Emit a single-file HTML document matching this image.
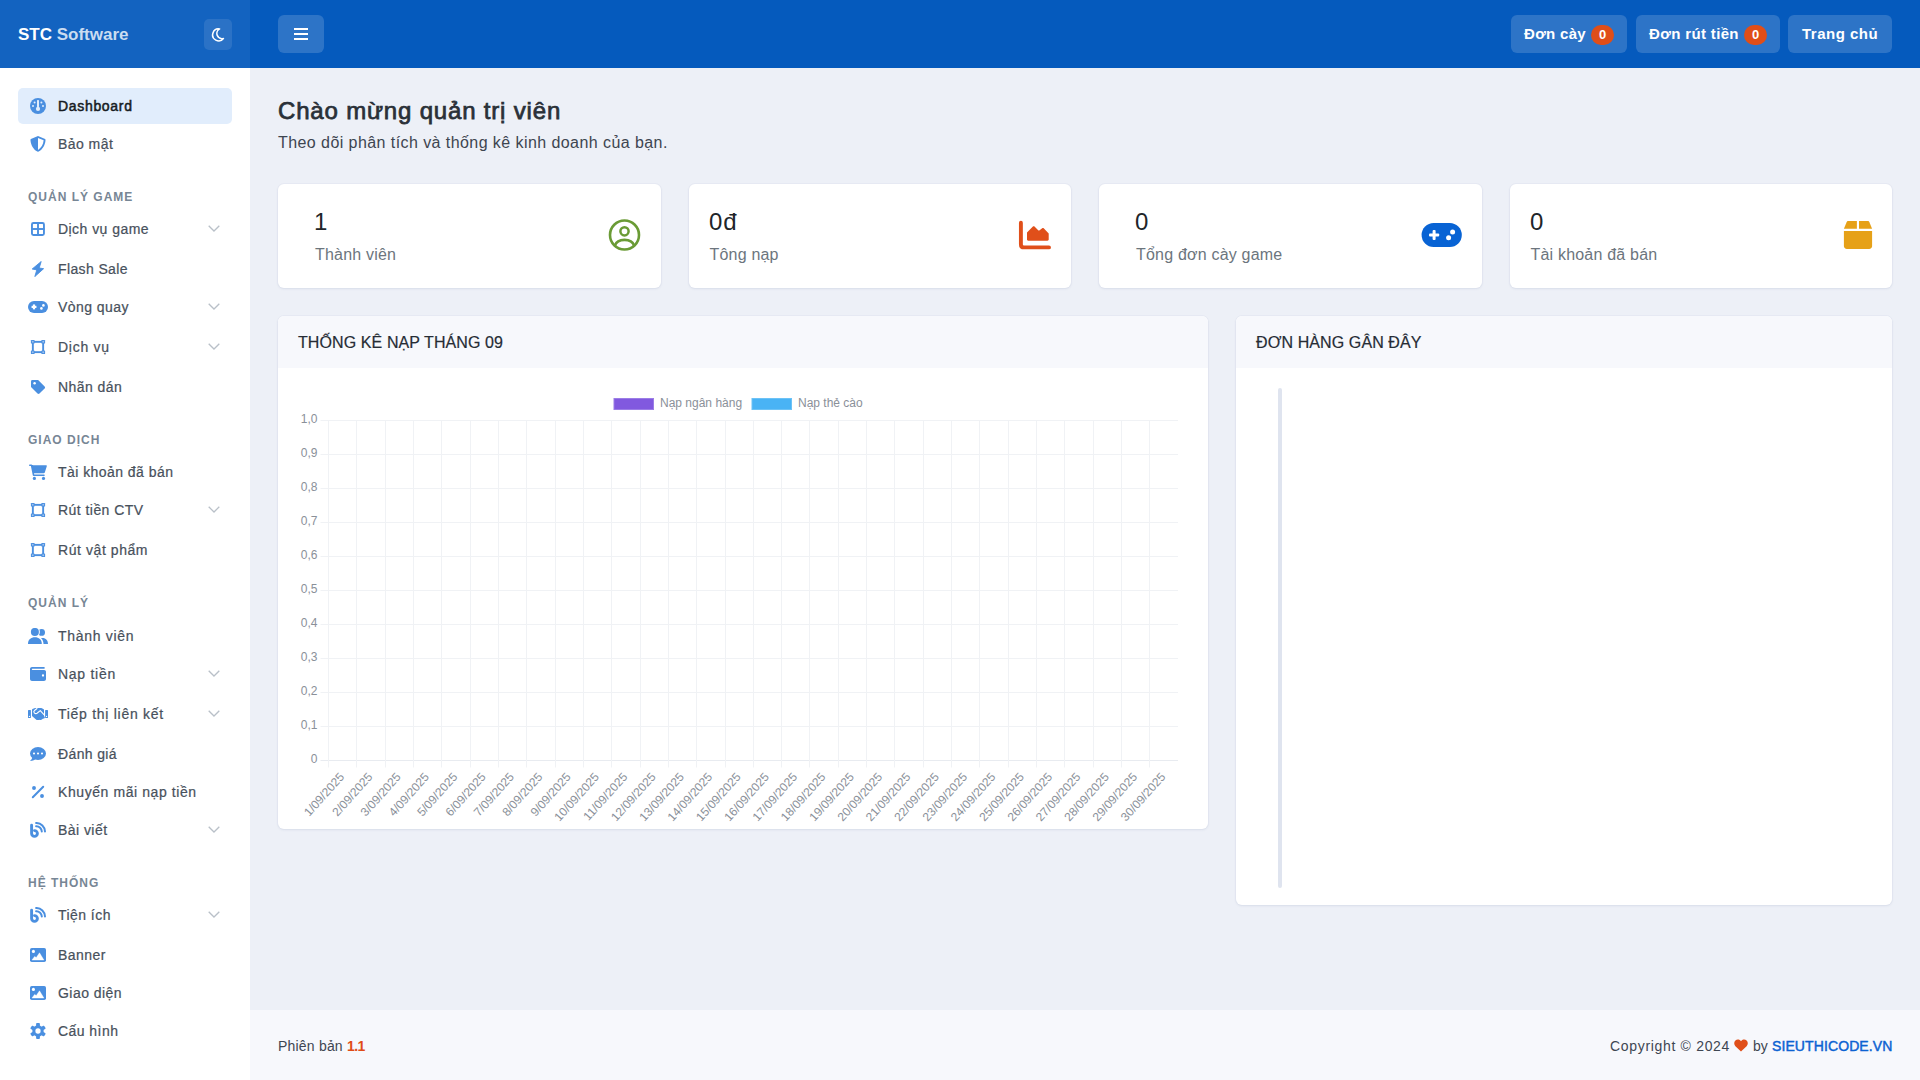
<!DOCTYPE html>
<html lang="vi"><head><meta charset="utf-8"><title>Dashboard</title>
<style>
*{box-sizing:border-box;margin:0;padding:0}
html,body{width:1920px;height:1080px;overflow:hidden}
body{position:relative;background:#edf0f7;font-family:"Liberation Sans", sans-serif;color:#3b4350}
.abs{position:absolute}
#top{position:absolute;left:0;top:0;width:1920px;height:68px;background:#055abd}
#sbh{position:absolute;left:0;top:0;width:250px;height:68px;background:rgba(255,255,255,0.06)}
#logo{position:absolute;left:18px;top:25px;height:20px;line-height:20px;font-size:17px;font-weight:700;color:#fff;white-space:nowrap}
#logo span{color:rgba(255,255,255,0.78)}
.hbtn{position:absolute;top:15px;height:38px;border-radius:6px;background:rgba(255,255,255,0.16)}
.htxt{position:absolute;top:24px;height:20px;line-height:20px;font-size:15px;font-weight:700;color:#fff;white-space:nowrap}
.badge{position:absolute;top:25px;height:20px;width:23px;border-radius:10px;background:#e04e18;color:#fff;font-size:13px;font-weight:700;line-height:20px;text-align:center}
#side{position:absolute;left:0;top:68px;width:250px;height:1012px;background:#fff}
.it{position:absolute;left:58px;height:20px;line-height:20px;font-size:14px;color:#48515c;white-space:nowrap;letter-spacing:0.45px;-webkit-text-stroke:0.22px #48515c}
.it.act{color:#161b22;letter-spacing:0.68px;-webkit-text-stroke:0.5px #161b22}
.actbg{position:absolute;left:18px;top:88px;width:214px;height:36px;border-radius:5px;background:#e1edfc}
.sec{position:absolute;left:28px;height:20px;line-height:20px;font-size:12px;font-weight:700;color:#778695;letter-spacing:1px;white-space:nowrap}
.ico{position:absolute;height:16px;line-height:0}
.chev{position:absolute;left:208px}
.card{position:absolute;background:#fff;border-radius:6px;box-shadow:0 0 0 1px rgba(40,60,110,0.025),0 1px 3px rgba(40,60,110,0.08)}
.num{position:absolute;height:30px;line-height:30px;font-size:24px;color:#212529;white-space:nowrap}
.lbl{position:absolute;height:20px;line-height:20px;font-size:16px;color:#6c757d;white-space:nowrap;letter-spacing:0.2px}
.chead{position:absolute;left:0;top:0;right:0;height:52px;background:#f7f8fc;border-radius:6px 6px 0 0}
.htitle{position:absolute;height:20px;line-height:20px;font-size:16px;color:#262c35;white-space:nowrap;letter-spacing:0.1px;-webkit-text-stroke:0.2px #262c35}
.tk{font-family:"Liberation Sans", sans-serif;font-size:12px;fill:#8a9099}
#foot{position:absolute;left:250px;top:1010px;width:1670px;height:70px;background:#f7f8fc}
.ft{position:absolute;height:20px;line-height:20px;font-size:14px;color:#3e4652;white-space:nowrap}
</style></head><body>
<div id="top"></div>
<div id="sbh"></div>
<div id="logo">STC <span>Software</span></div>
<div class="abs" style="left:204px;top:19px;width:28px;height:31px;border-radius:5px;background:rgba(255,255,255,0.1)"></div>
<svg class="abs" style="left:210px;top:27px" width="16" height="16" viewBox="0 0 16 16"><path d="M9.6 1.9 A6 6 0 1 0 13.4 11.5 A5.2 5.2 0 0 1 9.6 1.9 Z" fill="none" stroke="#fff" stroke-width="1.55" stroke-linejoin="round"/></svg>
<div class="abs" style="left:278px;top:15px;width:46px;height:38px;border-radius:6px;background:rgba(255,255,255,0.16)"></div>
<div class="abs" style="left:294px;top:28px;width:14px;height:2px;background:#fff"></div>
<div class="abs" style="left:294px;top:33px;width:14px;height:2px;background:#fff"></div>
<div class="abs" style="left:294px;top:38px;width:14px;height:2px;background:#fff"></div>

<div class="hbtn" style="left:1511px;width:116px"></div>
<div class="htxt" style="left:1524px;letter-spacing:0.3px">Đơn cày</div>
<div class="badge" style="left:1591px">0</div>
<div class="hbtn" style="left:1636px;width:144px"></div>
<div class="htxt" style="left:1649px;letter-spacing:0.35px">Đơn rút tiền</div>
<div class="badge" style="left:1744px">0</div>
<div class="hbtn" style="left:1788px;width:104px"></div>
<div class="htxt" style="left:1802px;letter-spacing:0.5px">Trang chủ</div>

<div id="side"></div>
<div class="actbg"></div>
<div class="ico" style="top:98.0px;left:30.0px"><svg width="16" height="16" viewBox="0 0 16 16"><circle cx="8" cy="8" r="8" fill="#4a8fe0"/><rect x="7" y="2" width="2" height="7" rx="0.6" fill="#e1edfc"/><circle cx="8" cy="10.9" r="2.1" fill="#e1edfc"/><circle cx="4.6" cy="4.4" r="1" fill="#e1edfc"/><circle cx="11.4" cy="4.4" r="1" fill="#e1edfc"/><circle cx="3" cy="7.9" r="1" fill="#e1edfc"/><circle cx="13" cy="7.9" r="1" fill="#e1edfc"/></svg></div>
<div class="it act" style="top:96.0px">Dashboard</div>
<div class="ico" style="top:136.0px;left:30.0px"><svg width="16" height="16" viewBox="0 0 16 16"><path d="M8 0 L15.1 3.1 C15.5 3.3 15.6 3.8 15.5 4.4 C15.1 9 12.6 13.3 8.6 15.6 C8.2 15.9 7.8 15.9 7.4 15.6 C3.4 13.3 0.9 9 0.5 4.4 C0.4 3.8 0.5 3.3 0.9 3.1 Z" fill="#4a8fe0"/><path d="M8 1.9 L13.6 4.3 C13.4 8.3 11.4 11.8 8 13.9 Z" fill="#fff"/></svg></div>
<div class="it" style="top:134.0px">Bảo mật</div>
<div class="sec" style="top:186.6px">QUẢN LÝ GAME</div>
<div class="ico" style="top:221.0px;left:30.0px"><svg width="16" height="16" viewBox="0 0 16 16"><rect x="1.95" y="1.95" width="12" height="12" rx="1.5" fill="none" stroke="#4a8fe0" stroke-width="1.9"/><rect x="7.05" y="1.5" width="1.9" height="13" fill="#4a8fe0"/><rect x="1.5" y="7.05" width="13" height="1.9" fill="#4a8fe0"/></svg></div>
<div class="it" style="top:219.0px">Dịch vụ game</div>
<svg class="chev" style="top:225.0px" width="12" height="7" viewBox="0 0 12 7"><path d="M0.7 0.7 L6 6 L11.3 0.7" fill="none" stroke="#b9c0c8" stroke-width="1.3"/></svg>
<div class="ico" style="top:261.0px;left:30.0px"><svg width="16" height="16" viewBox="0 0 16 16"><path d="M11.2 0.5 L2.2 8 L6.8 8.9 L4.8 15.6 L13.6 7.7 L9.2 7 Z" fill="#4a8fe0" stroke="#4a8fe0" stroke-width="0.9" stroke-linejoin="round"/></svg></div>
<div class="it" style="top:259.0px;letter-spacing:0.38px">Flash Sale</div>
<div class="ico" style="top:299.0px;left:28.0px"><svg width="20" height="16" viewBox="0 0 20 16"><rect x="0" y="2" width="20" height="12" rx="6" fill="#4a8fe0"/><rect x="3.55" y="6.8" width="4.9" height="2.2" fill="#fff"/><rect x="4.9" y="5.45" width="2.2" height="4.9" fill="#fff"/><circle cx="15.4" cy="6.4" r="1.3" fill="#fff"/><circle cx="13.4" cy="9.4" r="1.3" fill="#fff"/></svg></div>
<div class="it" style="top:297.0px">Vòng quay</div>
<svg class="chev" style="top:303.0px" width="12" height="7" viewBox="0 0 12 7"><path d="M0.7 0.7 L6 6 L11.3 0.7" fill="none" stroke="#b9c0c8" stroke-width="1.3"/></svg>
<div class="ico" style="top:339.0px;left:30.0px"><svg width="16" height="16" viewBox="0 0 16 16"><rect x="2.85" y="2.85" width="10.3" height="10.3" fill="none" stroke="#4a8fe0" stroke-width="1.9"/><g fill="#4a8fe0"><rect x="0.9" y="0.9" width="3.7" height="3.7" rx="0.7"/><rect x="11.4" y="0.9" width="3.7" height="3.7" rx="0.7"/><rect x="0.9" y="11.4" width="3.7" height="3.7" rx="0.7"/><rect x="11.4" y="11.4" width="3.7" height="3.7" rx="0.7"/></g><g fill="#fff" opacity="0.45"><rect x="1.9" y="1.9" width="1.7" height="1.7"/><rect x="12.4" y="1.9" width="1.7" height="1.7"/><rect x="1.9" y="12.4" width="1.7" height="1.7"/><rect x="12.4" y="12.4" width="1.7" height="1.7"/></g></svg></div>
<div class="it" style="top:337.0px;letter-spacing:0.72px">Dịch vụ</div>
<svg class="chev" style="top:343.0px" width="12" height="7" viewBox="0 0 12 7"><path d="M0.7 0.7 L6 6 L11.3 0.7" fill="none" stroke="#b9c0c8" stroke-width="1.3"/></svg>
<div class="ico" style="top:379.0px;left:30.0px"><svg width="16" height="16" viewBox="0 0 16 16"><path d="M1 2.3 C1 1.6 1.6 1 2.3 1 L8.1 1 L14.6 7.5 C15.2 8.1 15.2 8.9 14.6 9.5 L9.5 14.6 C8.9 15.2 8.1 15.2 7.5 14.6 L1 8.1 Z" fill="#4a8fe0"/><circle cx="4.6" cy="4.3" r="1.2" fill="#fff"/></svg></div>
<div class="it" style="top:377.0px">Nhãn dán</div>
<div class="sec" style="top:429.8px">GIAO DỊCH</div>
<div class="ico" style="top:464.0px;left:29.0px"><svg width="18" height="16" viewBox="0 0 18 16"><path d="M0.7 0.4 L2.4 0.4 C2.8 0.4 3.1 0.7 3.2 1.1 L3.2 1.2 L17 1.2 C17.6 1.2 18 1.8 17.8 2.3 L15.8 8.4 C15.6 8.9 15.2 9.2 14.7 9.2 L5 9.2 L5.2 10.4 L15 10.4 C15.5 10.4 15.8 10.8 15.8 11.2 C15.8 11.6 15.5 12 15 12 L4.9 12 C4.3 12 3.8 11.6 3.7 11 L1.9 1.9 L0.7 1.9 C0.3 1.9 0 1.6 0 1.2 C0 0.8 0.3 0.4 0.7 0.4 Z" fill="#4a8fe0"/><path d="M3.2 1.2 L5 9.2" stroke="#4a8fe0" stroke-width="1.5"/><circle cx="5.4" cy="14.4" r="1.6" fill="#4a8fe0"/><circle cx="14.5" cy="14.4" r="1.6" fill="#4a8fe0"/></svg></div>
<div class="it" style="top:462.0px">Tài khoản đã bán</div>
<div class="ico" style="top:502.0px;left:30.0px"><svg width="16" height="16" viewBox="0 0 16 16"><rect x="2.85" y="2.85" width="10.3" height="10.3" fill="none" stroke="#4a8fe0" stroke-width="1.9"/><g fill="#4a8fe0"><rect x="0.9" y="0.9" width="3.7" height="3.7" rx="0.7"/><rect x="11.4" y="0.9" width="3.7" height="3.7" rx="0.7"/><rect x="0.9" y="11.4" width="3.7" height="3.7" rx="0.7"/><rect x="11.4" y="11.4" width="3.7" height="3.7" rx="0.7"/></g><g fill="#fff" opacity="0.45"><rect x="1.9" y="1.9" width="1.7" height="1.7"/><rect x="12.4" y="1.9" width="1.7" height="1.7"/><rect x="1.9" y="12.4" width="1.7" height="1.7"/><rect x="12.4" y="12.4" width="1.7" height="1.7"/></g></svg></div>
<div class="it" style="top:500.0px">Rút tiền CTV</div>
<svg class="chev" style="top:506.0px" width="12" height="7" viewBox="0 0 12 7"><path d="M0.7 0.7 L6 6 L11.3 0.7" fill="none" stroke="#b9c0c8" stroke-width="1.3"/></svg>
<div class="ico" style="top:542.0px;left:30.0px"><svg width="16" height="16" viewBox="0 0 16 16"><rect x="2.85" y="2.85" width="10.3" height="10.3" fill="none" stroke="#4a8fe0" stroke-width="1.9"/><g fill="#4a8fe0"><rect x="0.9" y="0.9" width="3.7" height="3.7" rx="0.7"/><rect x="11.4" y="0.9" width="3.7" height="3.7" rx="0.7"/><rect x="0.9" y="11.4" width="3.7" height="3.7" rx="0.7"/><rect x="11.4" y="11.4" width="3.7" height="3.7" rx="0.7"/></g><g fill="#fff" opacity="0.45"><rect x="1.9" y="1.9" width="1.7" height="1.7"/><rect x="12.4" y="1.9" width="1.7" height="1.7"/><rect x="1.9" y="12.4" width="1.7" height="1.7"/><rect x="12.4" y="12.4" width="1.7" height="1.7"/></g></svg></div>
<div class="it" style="top:540.0px;letter-spacing:0.57px">Rút vật phẩm</div>
<div class="sec" style="top:592.7px">QUẢN LÝ</div>
<div class="ico" style="top:628.0px;left:28.0px"><svg width="20" height="16" viewBox="0 0 20 16"><circle cx="13.6" cy="4.4" r="3.4" fill="#4a8fe0"/><circle cx="6.9" cy="3.9" r="5" fill="#fff"/><circle cx="6.9" cy="3.9" r="4" fill="#4a8fe0"/><path d="M0 15.9 C0 11.6 3 9.3 6.9 9.3 C10.8 9.3 13.8 11.6 13.8 15.9 Z" fill="#4a8fe0"/><path d="M15.5 15.9 L20 15.9 C20 12.6 17.9 10 14.6 10 C14 10 13.5 10.1 13 10.3 C14.7 11.6 15.5 13.6 15.5 15.9 Z" fill="#4a8fe0"/></svg></div>
<div class="it" style="top:626.0px;letter-spacing:0.7px">Thành viên</div>
<div class="ico" style="top:666.0px;left:30.0px"><svg width="16" height="16" viewBox="0 0 16 16"><path d="M0 3 C0 1.9 0.9 1 2 1 L14.6 1 L14.6 2.8 L2.3 2.8 C2 2.8 1.8 3 1.8 3.3 C1.8 3.7 2.1 4 2.5 4 L14.2 4 C15.2 4 16 4.8 16 5.8 L16 13 C16 14.1 15.1 15 14 15 L2 15 C0.9 15 0 14.1 0 13 Z" fill="#4a8fe0"/><circle cx="13" cy="9.5" r="1.15" fill="#fff"/></svg></div>
<div class="it" style="top:664.0px;letter-spacing:0.72px">Nạp tiền</div>
<svg class="chev" style="top:670.0px" width="12" height="7" viewBox="0 0 12 7"><path d="M0.7 0.7 L6 6 L11.3 0.7" fill="none" stroke="#b9c0c8" stroke-width="1.3"/></svg>
<div class="ico" style="top:706.0px;left:28.0px"><svg width="20" height="16" viewBox="0 0 20 16"><rect x="0" y="3.9" width="2.9" height="8" rx="0.5" fill="#4a8fe0"/><rect x="17.1" y="3.9" width="2.9" height="8" rx="0.5" fill="#4a8fe0"/><circle cx="1.45" cy="10.4" r="0.65" fill="#fff"/><circle cx="18.55" cy="10.4" r="0.65" fill="#fff"/><path d="M4 3.6 C5.2 2.6 6.6 2.1 8 2.1 L9.8 2.1 L12.2 1.9 C13.4 1.9 14.6 2.4 15.6 3.2 L16 3.6 L16 10 L16.6 10.7 C17.1 11.3 16.8 12.2 16 12.5 L14.8 12.7 C14.3 13.3 13.6 13.8 12.8 13.9 C12.2 14.1 11.7 14 11.3 13.7 C10.9 14.2 10.3 14.2 9.8 13.9 C9.4 14.3 8.8 14.1 8.3 13.7 L4 9.9 Z" fill="#4a8fe0"/><path d="M9.3 2.3 L6.5 4.5 C5.8 5 5.8 6.2 6.3 6.9 C7.2 7.8 8.7 7.7 9.6 6.8 L12.3 4.6 L16.2 8.8" fill="none" stroke="#fff" stroke-width="1.1" stroke-linejoin="round"/></svg></div>
<div class="it" style="top:704.0px;letter-spacing:0.72px">Tiếp thị liên kết</div>
<svg class="chev" style="top:710.0px" width="12" height="7" viewBox="0 0 12 7"><path d="M0.7 0.7 L6 6 L11.3 0.7" fill="none" stroke="#b9c0c8" stroke-width="1.3"/></svg>
<div class="ico" style="top:746.0px;left:30.0px"><svg width="16" height="16" viewBox="0 0 16 16"><ellipse cx="8" cy="7.5" rx="8" ry="6.4" fill="#4a8fe0"/><path d="M2.4 11 C2.3 12.5 1.3 13.8 0.3 14.6 C0 14.8 0.1 15 0.5 15 C2.2 15 4 14.4 5.3 13.3 Z" fill="#4a8fe0"/><circle cx="4" cy="7.5" r="1.05" fill="#fff"/><circle cx="8" cy="7.5" r="1.05" fill="#fff"/><circle cx="12" cy="7.5" r="1.05" fill="#fff"/></svg></div>
<div class="it" style="top:744.0px;letter-spacing:0.37px">Đánh giá</div>
<div class="ico" style="top:784.0px;left:30.0px"><svg width="16" height="16" viewBox="0 0 16 16"><path d="M13.2 2.8 L2.8 13.2" stroke="#4a8fe0" stroke-width="2" stroke-linecap="round"/><circle cx="4" cy="4" r="1.95" fill="#4a8fe0"/><circle cx="12" cy="12" r="1.95" fill="#4a8fe0"/></svg></div>
<div class="it" style="top:782.0px;letter-spacing:0.58px">Khuyến mãi nạp tiền</div>
<div class="ico" style="top:822.0px;left:30.0px"><svg width="16" height="16" viewBox="0 0 16 16"><path d="M1.6 3.2 L1.6 11.5 A2.9 2.9 0 1 0 4.5 8.6" fill="none" stroke="#4a8fe0" stroke-width="2.9" stroke-linecap="round"/><path d="M6.1 4.2 A5.4 5.4 0 0 1 11.8 9.6" fill="none" stroke="#4a8fe0" stroke-width="2" stroke-linecap="round"/><path d="M6.1 1 A8.6 8.6 0 0 1 15 9.6" fill="none" stroke="#4a8fe0" stroke-width="2" stroke-linecap="round"/></svg></div>
<div class="it" style="top:820.0px">Bài viết</div>
<svg class="chev" style="top:826.0px" width="12" height="7" viewBox="0 0 12 7"><path d="M0.7 0.7 L6 6 L11.3 0.7" fill="none" stroke="#b9c0c8" stroke-width="1.3"/></svg>
<div class="sec" style="top:872.8px">HỆ THỐNG</div>
<div class="ico" style="top:907.0px;left:30.0px"><svg width="16" height="16" viewBox="0 0 16 16"><path d="M1.6 3.2 L1.6 11.5 A2.9 2.9 0 1 0 4.5 8.6" fill="none" stroke="#4a8fe0" stroke-width="2.9" stroke-linecap="round"/><path d="M6.1 4.2 A5.4 5.4 0 0 1 11.8 9.6" fill="none" stroke="#4a8fe0" stroke-width="2" stroke-linecap="round"/><path d="M6.1 1 A8.6 8.6 0 0 1 15 9.6" fill="none" stroke="#4a8fe0" stroke-width="2" stroke-linecap="round"/></svg></div>
<div class="it" style="top:905.0px">Tiện ích</div>
<svg class="chev" style="top:911.0px" width="12" height="7" viewBox="0 0 12 7"><path d="M0.7 0.7 L6 6 L11.3 0.7" fill="none" stroke="#b9c0c8" stroke-width="1.3"/></svg>
<div class="ico" style="top:947.0px;left:30.0px"><svg width="16" height="16" viewBox="0 0 16 16"><rect x="0" y="1" width="16" height="14" rx="1.8" fill="#4a8fe0"/><circle cx="3.4" cy="4.4" r="1.55" fill="#fff"/><path d="M2 13 L4.6 9.5 L6.3 10.6 L9.5 5.8 L13.9 13 Z" fill="#fff" stroke="#fff" stroke-width="0.4" stroke-linejoin="round"/></svg></div>
<div class="it" style="top:945.0px">Banner</div>
<div class="ico" style="top:985.0px;left:30.0px"><svg width="16" height="16" viewBox="0 0 16 16"><rect x="0" y="1" width="16" height="14" rx="1.8" fill="#4a8fe0"/><circle cx="3.4" cy="4.4" r="1.55" fill="#fff"/><path d="M2 13 L4.6 9.5 L6.3 10.6 L9.5 5.8 L13.9 13 Z" fill="#fff" stroke="#fff" stroke-width="0.4" stroke-linejoin="round"/></svg></div>
<div class="it" style="top:983.0px">Giao diện</div>
<div class="ico" style="top:1023.0px;left:30.0px"><svg width="16" height="16" viewBox="0 0 16 16"><g fill="#4a8fe0"><circle cx="8" cy="8" r="5.7"/><rect x="6.1" y="0" width="3.8" height="16" rx="0.9"/><rect x="6.1" y="0" width="3.8" height="16" rx="0.9" transform="rotate(60 8 8)"/><rect x="6.1" y="0" width="3.8" height="16" rx="0.9" transform="rotate(120 8 8)"/></g><circle cx="8" cy="8" r="2.65" fill="#fff"/></svg></div>
<div class="it" style="top:1021.0px">Cấu hình</div>

<div class="abs" style="left:278px;top:96px;height:30px;line-height:30px;font-size:24px;color:#2a3038;white-space:nowrap;letter-spacing:0.82px;-webkit-text-stroke:0.75px #2a3038">Chào mừng quản trị viên</div>
<div class="abs" style="left:278px;top:133px;height:20px;line-height:20px;font-size:16px;color:#3d4550;white-space:nowrap;letter-spacing:0.43px">Theo dõi phân tích và thống kê kinh doanh của bạn.</div>

<div class="card" style="left:278px;top:184px;width:382.5px;height:104px"></div>
<div class="card" style="left:688.5px;top:184px;width:382.5px;height:104px"></div>
<div class="card" style="left:1099px;top:184px;width:382.5px;height:104px"></div>
<div class="card" style="left:1509.5px;top:184px;width:382.5px;height:104px"></div>
<div class="num" style="left:314px;top:207px">1</div>
<div class="lbl" style="left:315px;top:245px">Thành viên</div>
<div class="num" style="left:709px;top:207px;letter-spacing:1px">0đ</div>
<div class="lbl" style="left:709.5px;top:245px">Tông nạp</div>
<div class="num" style="left:1135px;top:207px">0</div>
<div class="lbl" style="left:1136px;top:245px">Tổng đơn cày game</div>
<div class="num" style="left:1530px;top:207px">0</div>
<div class="lbl" style="left:1530.5px;top:245px">Tài khoản đã bán</div>

<svg class="abs" style="left:606px;top:217px" width="36" height="36" viewBox="0 0 36 36"><circle cx="18.5" cy="18" r="14.5" fill="none" stroke="#6a9b35" stroke-width="2.6"/><circle cx="18.5" cy="14.3" r="4.1" fill="none" stroke="#6a9b35" stroke-width="2.5"/><path d="M8.8 28.6 C10.2 24.6 13.6 22.9 18.5 22.9 C23.4 22.9 26.8 24.6 28.2 28.6" fill="none" stroke="#6a9b35" stroke-width="2.6"/></svg>
<svg class="abs" style="left:1017px;top:218px" width="36" height="34" viewBox="0 0 36 34"><path d="M3.9 4.8 L3.9 26.4 C3.9 28.4 5 29.4 7 29.4 L32 29.4" fill="none" stroke="#e04f1a" stroke-width="3.9" stroke-linecap="round"/><path d="M10 14.6 L15.9 8.6 C16.4 8.1 17 8.1 17.5 8.6 L21.2 12.2 C21.6 12.6 22.2 12.6 22.6 12.2 L25.2 10.2 C25.6 9.8 26.3 9.8 26.7 10.3 L31.7 15.6 L31.7 21.6 C31.7 22.3 31.2 22.8 30.5 22.8 L11.2 22.8 C10.5 22.8 10 22.3 10 21.6 Z" fill="#e04f1a"/></svg>
<svg class="abs" style="left:1421px;top:222px" width="42" height="26" viewBox="0 0 42 26"><rect x="0.6" y="1" width="40.2" height="24" rx="12" fill="#0863d4"/><rect x="8" y="11.5" width="10.2" height="3" rx="1" fill="#fff"/><rect x="11.6" y="8" width="3" height="10" rx="1" fill="#fff"/><circle cx="31.6" cy="10" r="2.5" fill="#fff"/><circle cx="27.6" cy="15.8" r="2.5" fill="#fff"/></svg>
<svg class="abs" style="left:1842px;top:219px" width="32" height="32" viewBox="0 0 32 32"><path d="M6.2 2 L14.9 2 L14.9 9.8 L1.9 9.8 L4.6 3.2 C4.9 2.5 5.5 2 6.2 2 Z" fill="#e6a118"/><path d="M17 2 L25.8 2 C26.5 2 27.1 2.5 27.4 3.2 L30.1 9.8 L17 9.8 Z" fill="#e6a118"/><path d="M1.9 12 L30.1 12 L30.1 27 C30.1 28.6 28.8 29.9 27.2 29.9 L4.8 29.9 C3.2 29.9 1.9 28.6 1.9 27 Z" fill="#e6a118"/></svg>

<div class="card" style="left:278px;top:316px;width:930px;height:513px"><div class="chead"></div></div>
<div class="htitle" style="left:298px;top:333px">THỐNG KÊ NẠP THÁNG 09</div>
<div class="card" style="left:1236px;top:316px;width:656px;height:589px"><div class="chead"></div></div>
<div class="htitle" style="left:1256px;top:333px">ĐƠN HÀNG GÂN ĐÂY</div>
<div class="abs" style="left:1278px;top:388px;width:4px;height:500px;border-radius:2px;background:#dfe4ef"></div>

<svg class="abs" style="left:0;top:0" width="1920" height="1080" viewBox="0 0 1920 1080">
<rect x="614" y="398.5" width="39.5" height="11" fill="#8159df" stroke="#9b7de6" stroke-width="1"/>
<text x="660" y="407" class="tk">Nạp ngân hàng</text>
<rect x="752" y="398.5" width="39.5" height="11" fill="#49b3f5" stroke="#6cc2f6" stroke-width="1"/>
<text x="798" y="407" class="tk">Nạp thẻ cào</text>
<line x1="320.5" y1="420.5" x2="1178.0" y2="420.5" stroke="#f0f2f5" stroke-width="1"/>
<line x1="320.5" y1="454.5" x2="1178.0" y2="454.5" stroke="#f0f2f5" stroke-width="1"/>
<line x1="320.5" y1="488.5" x2="1178.0" y2="488.5" stroke="#f0f2f5" stroke-width="1"/>
<line x1="320.5" y1="522.5" x2="1178.0" y2="522.5" stroke="#f0f2f5" stroke-width="1"/>
<line x1="320.5" y1="556.5" x2="1178.0" y2="556.5" stroke="#f0f2f5" stroke-width="1"/>
<line x1="320.5" y1="590.5" x2="1178.0" y2="590.5" stroke="#f0f2f5" stroke-width="1"/>
<line x1="320.5" y1="624.5" x2="1178.0" y2="624.5" stroke="#f0f2f5" stroke-width="1"/>
<line x1="320.5" y1="658.5" x2="1178.0" y2="658.5" stroke="#f0f2f5" stroke-width="1"/>
<line x1="320.5" y1="692.5" x2="1178.0" y2="692.5" stroke="#f0f2f5" stroke-width="1"/>
<line x1="320.5" y1="726.5" x2="1178.0" y2="726.5" stroke="#f0f2f5" stroke-width="1"/>
<line x1="320.5" y1="760.5" x2="1178.0" y2="760.5" stroke="#e8ebf0" stroke-width="1"/>
<line x1="328.5" y1="420.0" x2="328.5" y2="767.5" stroke="#f0f2f5" stroke-width="1"/>
<line x1="356.5" y1="420.0" x2="356.5" y2="767.5" stroke="#f0f2f5" stroke-width="1"/>
<line x1="385.5" y1="420.0" x2="385.5" y2="767.5" stroke="#f0f2f5" stroke-width="1"/>
<line x1="413.5" y1="420.0" x2="413.5" y2="767.5" stroke="#f0f2f5" stroke-width="1"/>
<line x1="441.5" y1="420.0" x2="441.5" y2="767.5" stroke="#f0f2f5" stroke-width="1"/>
<line x1="470.5" y1="420.0" x2="470.5" y2="767.5" stroke="#f0f2f5" stroke-width="1"/>
<line x1="498.5" y1="420.0" x2="498.5" y2="767.5" stroke="#f0f2f5" stroke-width="1"/>
<line x1="526.5" y1="420.0" x2="526.5" y2="767.5" stroke="#f0f2f5" stroke-width="1"/>
<line x1="555.5" y1="420.0" x2="555.5" y2="767.5" stroke="#f0f2f5" stroke-width="1"/>
<line x1="583.5" y1="420.0" x2="583.5" y2="767.5" stroke="#f0f2f5" stroke-width="1"/>
<line x1="611.5" y1="420.0" x2="611.5" y2="767.5" stroke="#f0f2f5" stroke-width="1"/>
<line x1="640.5" y1="420.0" x2="640.5" y2="767.5" stroke="#f0f2f5" stroke-width="1"/>
<line x1="668.5" y1="420.0" x2="668.5" y2="767.5" stroke="#f0f2f5" stroke-width="1"/>
<line x1="696.5" y1="420.0" x2="696.5" y2="767.5" stroke="#f0f2f5" stroke-width="1"/>
<line x1="725.5" y1="420.0" x2="725.5" y2="767.5" stroke="#f0f2f5" stroke-width="1"/>
<line x1="753.5" y1="420.0" x2="753.5" y2="767.5" stroke="#f0f2f5" stroke-width="1"/>
<line x1="781.5" y1="420.0" x2="781.5" y2="767.5" stroke="#f0f2f5" stroke-width="1"/>
<line x1="809.5" y1="420.0" x2="809.5" y2="767.5" stroke="#f0f2f5" stroke-width="1"/>
<line x1="838.5" y1="420.0" x2="838.5" y2="767.5" stroke="#f0f2f5" stroke-width="1"/>
<line x1="866.5" y1="420.0" x2="866.5" y2="767.5" stroke="#f0f2f5" stroke-width="1"/>
<line x1="894.5" y1="420.0" x2="894.5" y2="767.5" stroke="#f0f2f5" stroke-width="1"/>
<line x1="923.5" y1="420.0" x2="923.5" y2="767.5" stroke="#f0f2f5" stroke-width="1"/>
<line x1="951.5" y1="420.0" x2="951.5" y2="767.5" stroke="#f0f2f5" stroke-width="1"/>
<line x1="979.5" y1="420.0" x2="979.5" y2="767.5" stroke="#f0f2f5" stroke-width="1"/>
<line x1="1008.5" y1="420.0" x2="1008.5" y2="767.5" stroke="#f0f2f5" stroke-width="1"/>
<line x1="1036.5" y1="420.0" x2="1036.5" y2="767.5" stroke="#f0f2f5" stroke-width="1"/>
<line x1="1064.5" y1="420.0" x2="1064.5" y2="767.5" stroke="#f0f2f5" stroke-width="1"/>
<line x1="1093.5" y1="420.0" x2="1093.5" y2="767.5" stroke="#f0f2f5" stroke-width="1"/>
<line x1="1121.5" y1="420.0" x2="1121.5" y2="767.5" stroke="#f0f2f5" stroke-width="1"/>
<line x1="1149.5" y1="420.0" x2="1149.5" y2="767.5" stroke="#f0f2f5" stroke-width="1"/>
<text x="317.5" y="423.3" text-anchor="end" class="tk">1,0</text>
<text x="317.5" y="457.3" text-anchor="end" class="tk">0,9</text>
<text x="317.5" y="491.3" text-anchor="end" class="tk">0,8</text>
<text x="317.5" y="525.3" text-anchor="end" class="tk">0,7</text>
<text x="317.5" y="559.3" text-anchor="end" class="tk">0,6</text>
<text x="317.5" y="593.3" text-anchor="end" class="tk">0,5</text>
<text x="317.5" y="627.3" text-anchor="end" class="tk">0,4</text>
<text x="317.5" y="661.3" text-anchor="end" class="tk">0,3</text>
<text x="317.5" y="695.3" text-anchor="end" class="tk">0,2</text>
<text x="317.5" y="729.3" text-anchor="end" class="tk">0,1</text>
<text x="317.5" y="763.3" text-anchor="end" class="tk">0</text>
<text transform="translate(341.7,774.5) rotate(-48)" text-anchor="end" y="4.3" class="tk">1/09/2025</text>
<text transform="translate(370.0,774.5) rotate(-48)" text-anchor="end" y="4.3" class="tk">2/09/2025</text>
<text transform="translate(398.3,774.5) rotate(-48)" text-anchor="end" y="4.3" class="tk">3/09/2025</text>
<text transform="translate(426.6,774.5) rotate(-48)" text-anchor="end" y="4.3" class="tk">4/09/2025</text>
<text transform="translate(454.9,774.5) rotate(-48)" text-anchor="end" y="4.3" class="tk">5/09/2025</text>
<text transform="translate(483.3,774.5) rotate(-48)" text-anchor="end" y="4.3" class="tk">6/09/2025</text>
<text transform="translate(511.6,774.5) rotate(-48)" text-anchor="end" y="4.3" class="tk">7/09/2025</text>
<text transform="translate(539.9,774.5) rotate(-48)" text-anchor="end" y="4.3" class="tk">8/09/2025</text>
<text transform="translate(568.2,774.5) rotate(-48)" text-anchor="end" y="4.3" class="tk">9/09/2025</text>
<text transform="translate(596.6,774.5) rotate(-48)" text-anchor="end" y="4.3" class="tk">10/09/2025</text>
<text transform="translate(624.9,774.5) rotate(-48)" text-anchor="end" y="4.3" class="tk">11/09/2025</text>
<text transform="translate(653.2,774.5) rotate(-48)" text-anchor="end" y="4.3" class="tk">12/09/2025</text>
<text transform="translate(681.5,774.5) rotate(-48)" text-anchor="end" y="4.3" class="tk">13/09/2025</text>
<text transform="translate(709.8,774.5) rotate(-48)" text-anchor="end" y="4.3" class="tk">14/09/2025</text>
<text transform="translate(738.2,774.5) rotate(-48)" text-anchor="end" y="4.3" class="tk">15/09/2025</text>
<text transform="translate(766.5,774.5) rotate(-48)" text-anchor="end" y="4.3" class="tk">16/09/2025</text>
<text transform="translate(794.8,774.5) rotate(-48)" text-anchor="end" y="4.3" class="tk">17/09/2025</text>
<text transform="translate(823.1,774.5) rotate(-48)" text-anchor="end" y="4.3" class="tk">18/09/2025</text>
<text transform="translate(851.5,774.5) rotate(-48)" text-anchor="end" y="4.3" class="tk">19/09/2025</text>
<text transform="translate(879.8,774.5) rotate(-48)" text-anchor="end" y="4.3" class="tk">20/09/2025</text>
<text transform="translate(908.1,774.5) rotate(-48)" text-anchor="end" y="4.3" class="tk">21/09/2025</text>
<text transform="translate(936.4,774.5) rotate(-48)" text-anchor="end" y="4.3" class="tk">22/09/2025</text>
<text transform="translate(964.7,774.5) rotate(-48)" text-anchor="end" y="4.3" class="tk">23/09/2025</text>
<text transform="translate(993.1,774.5) rotate(-48)" text-anchor="end" y="4.3" class="tk">24/09/2025</text>
<text transform="translate(1021.4,774.5) rotate(-48)" text-anchor="end" y="4.3" class="tk">25/09/2025</text>
<text transform="translate(1049.7,774.5) rotate(-48)" text-anchor="end" y="4.3" class="tk">26/09/2025</text>
<text transform="translate(1078.0,774.5) rotate(-48)" text-anchor="end" y="4.3" class="tk">27/09/2025</text>
<text transform="translate(1106.4,774.5) rotate(-48)" text-anchor="end" y="4.3" class="tk">28/09/2025</text>
<text transform="translate(1134.7,774.5) rotate(-48)" text-anchor="end" y="4.3" class="tk">29/09/2025</text>
<text transform="translate(1163.0,774.5) rotate(-48)" text-anchor="end" y="4.3" class="tk">30/09/2025</text>
</svg>

<div id="foot"></div>
<div class="ft" style="left:278px;top:1036px;letter-spacing:0.2px">Phiên bản <span style="color:#e04b17;letter-spacing:-0.6px;font-weight:700">1.1</span></div>
<div class="ft" style="left:1610px;top:1036px;letter-spacing:0.68px">Copyright © 2024</div>
<svg class="abs" style="left:1734px;top:1039px" width="14" height="13" viewBox="0 0 14 13"><path d="M7 12.6 L1.4 7.2 C-0.2 5.6 -0.2 3 1.4 1.5 C2.9 0.1 5.3 0.3 6.6 1.8 L7 2.3 L7.4 1.8 C8.7 0.3 11.1 0.1 12.6 1.5 C14.2 3 14.2 5.6 12.6 7.2 Z" fill="#e04f1a"/></svg>
<div class="ft" style="left:1753px;top:1036px">by</div>
<div class="ft" style="left:1772px;top:1036px;color:#0c62d2;letter-spacing:0.1px;-webkit-text-stroke:0.45px #0c62d2">SIEUTHICODE.VN</div>
</body></html>
